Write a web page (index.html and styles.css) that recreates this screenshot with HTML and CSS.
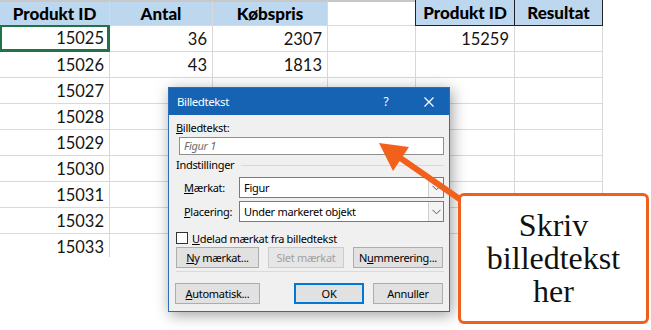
FILE: index.html
```html
<!DOCTYPE html>
<html lang="da">
<head>
<meta charset="utf-8">
<title>Billedtekst</title>
<link rel="stylesheet" href="styles.css">
</head>
<body>
<div class="sheet">
  <div class="c h">Produkt ID</div>
  <div class="c h">Antal</div>
  <div class="c h">Købspris</div>
  <div class="c hb"></div>
  <div class="c h hx">Produkt ID</div>
  <div class="c h hx hr">Resultat</div>

  <div class="c sel">15025</div><div class="c">36</div><div class="c">2307</div><div class="c"></div><div class="c">15259</div><div class="c"></div>
  <div class="c">15026</div><div class="c">43</div><div class="c">1813</div><div class="c"></div><div class="c"></div><div class="c"></div>
  <div class="c">15027</div><div class="c"></div><div class="c"></div><div class="c"></div><div class="c"></div><div class="c"></div>
  <div class="c">15028</div><div class="c"></div><div class="c"></div><div class="c"></div><div class="c"></div><div class="c"></div>
  <div class="c">15029</div><div class="c"></div><div class="c"></div><div class="c"></div><div class="c"></div><div class="c"></div>
  <div class="c">15030</div><div class="c"></div><div class="c"></div><div class="c"></div><div class="c"></div><div class="c"></div>
  <div class="c">15031</div><div class="c"></div><div class="c"></div><div class="c"></div><div class="c"></div><div class="c"></div>
  <div class="c">15032</div><div class="c"></div><div class="c"></div><div class="c"></div><div class="c"></div><div class="c"></div>
  <div class="c">15033</div><div class="c"></div><div class="c"></div><div class="c"></div><div class="c"></div><div class="c"></div>
</div>

<div class="dialog">
  <div class="titlebar">
    <span class="title">Billedtekst</span>
    <span class="help">?</span>
    <span class="close"><svg width="10" height="10" viewBox="0 0 10 10"><path d="M0.5 0.5L9.5 9.5M9.5 0.5L0.5 9.5" stroke="#fff" stroke-width="1.2" fill="none"/></svg></span>
  </div>
  <div class="dbody">
    <div class="lbl"><u>B</u>illedtekst:</div>
    <div class="input">Figur 1</div>
    <div class="group"><span>Indstillinger</span><span class="rule"></span></div>
    <div class="field">
      <span class="flabel"><u>M</u>ærkat:</span>
      <div class="combo"><span class="val">Figur</span><span class="drop"><svg width="9" height="6" viewBox="0 0 9 6"><path d="M0.5 0.8L4.5 4.8L8.5 0.8" stroke="#555" stroke-width="1" fill="none"/></svg></span></div>
    </div>
    <div class="field f2">
      <span class="flabel"><u>P</u>lacering:</span>
      <div class="combo"><span class="val">Under markeret objekt</span><span class="drop"><svg width="9" height="6" viewBox="0 0 9 6"><path d="M0.5 0.8L4.5 4.8L8.5 0.8" stroke="#555" stroke-width="1" fill="none"/></svg></span></div>
    </div>
    <div class="check"><span class="box"></span><span><u>U</u>delad mærkat fra billedtekst</span></div>
    <div class="btnrow">
      <span class="btn b-ny"><u>N</u>y mærkat...</span>
      <span class="btn b-slet dis">Slet mærkat</span>
      <span class="btn b-num">N<u>u</u>mmerering...</span>
    </div>
    <div class="sep"></div>
    <div class="btnrow r2">
      <span class="btn b-auto"><u>A</u>utomatisk...</span>
      <span class="btn b-ok def">OK</span>
      <span class="btn b-ann">Annuller</span>
    </div>
  </div>
</div>

<svg class="arrow" width="651" height="330" viewBox="0 0 651 330">
  <line x1="461" y1="200" x2="396" y2="155" stroke="#f2611c" stroke-width="6"/>
  <polygon points="379,143 409,147 393,171" fill="#f2611c"/>
</svg>

<div class="callout">Skriv<br>billedtekst<br>her</div>
</body>
</html>
```

FILE: styles.css
```css
* { box-sizing: border-box; margin: 0; padding: 0; }

body {
  width: 651px;
  height: 330px;
  background: #fff;
  position: relative;
  overflow: hidden;
  font-family: Lato, "Liberation Sans", sans-serif;
}

/* spreadsheet */
.sheet {
  display: grid;
  grid-template-columns: 110px 103px 115px 88px 99px 88px;
  grid-auto-rows: 26px;
  width: 603px;
  height: 257px;
  overflow: hidden;
}

.c {
  border-right: 1px solid #d9d9d9;
  border-bottom: 1px solid #d9d9d9;
  font-size: 16.5px;
  line-height: 26px;
  text-align: right;
  padding-right: 5px;
  color: #141414;
  white-space: nowrap;
}

.h {
  background: #bdd7ee;
  font-weight: 900;
  font-size: 17px;
  text-align: center;
  padding: 0;
  border-top: 2px solid #c8c8c8;
  line-height: 23px;
  color: #000;
}

.hb { border-top: 2px solid #c8c8c8; }

.hx {
  border-top: none;
  border-bottom: 1px solid #222;
  border-right: 1px solid #222;
  box-shadow: -1px 0 0 #222;
  line-height: 25px;
}

.sel {
  box-shadow: inset 0 0 0 2px #217346;
  border-right-color: #217346;
  border-bottom-color: #217346;
  margin-top: -1px;
  line-height: 27px;
  position: relative;
  z-index: 1;
}

/* dialog */
.dialog {
  position: absolute;
  left: 168px;
  top: 87px;
  width: 282px;
  height: 225px;
  background: #f0f0f0;
  border: 1px solid #2a6db8;
  box-shadow: 2px 3px 14px rgba(0, 0, 0, 0.38);
  font-family: "Noto Sans", "Open Sans", sans-serif;
  font-size: 11px;
  letter-spacing: -0.3px;
  color: #000;
  display: flex;
  flex-direction: column;
  z-index: 2;
}

.titlebar {
  height: 27px;
  background: #1663b3;
  color: #fff;
  display: flex;
  align-items: center;
  padding-left: 8px;
  padding-right: 8px;
  font-size: 11.5px;
  letter-spacing: -0.4px;
  flex: none;
}

.title { flex: 1; }

.help {
  width: 12px;
  text-align: center;
  margin-right: 25px;
  font-size: 12px;
}

.close {
  width: 24px;
  height: 12px;
  display: flex;
  align-items: center;
  justify-content: center;
}

.dbody {
  flex: 1;
  padding: 6px 5px 0 7px;
  display: flex;
  flex-direction: column;
}

.lbl {
  height: 14px;
  line-height: 14px;
}

u { text-decoration: underline; text-underline-offset: 1px; }

.input {
  margin: 2px 0 0 3px;
  height: 18px;
  border: 1px solid #8f8f8f;
  background: #fff;
  padding-left: 4px;
  line-height: 16px;
  font-style: italic;
  color: #6e6e6e;
}

.group {
  margin-top: 3px;
  height: 14px;
  display: flex;
  align-items: center;
  line-height: 14px;
}

.rule {
  flex: 1;
  height: 1px;
  background: #d8d8d8;
  margin-left: 7px;
}

.field {
  margin-top: 5px;
  height: 21px;
  display: flex;
  align-items: center;
  padding-left: 8px;
}

.f2 { margin-top: 3px; }

.flabel { width: 55px; }

.combo {
  flex: 1;
  height: 21px;
  border: 1px solid #7a7a7a;
  background: #fff;
  display: flex;
  align-items: center;
}

.val { flex: 1; padding-left: 4px; }

.drop {
  width: 15px;
  height: 19px;
  border-left: 1px solid #cfcfcf;
  background: #f4f4f4;
  display: flex;
  align-items: center;
  justify-content: center;
}

.check {
  margin-top: 9px;
  height: 14px;
  display: flex;
  align-items: center;
}

.box {
  width: 12px;
  height: 12px;
  border: 1px solid #333;
  background: #fff;
  margin-right: 4px;
}

.btnrow {
  margin-top: 2px;
  height: 21px;
  display: flex;
}

.r2 { margin-top: 11px; }

.btn {
  height: 21px;
  border: 1px solid #adadad;
  background: #e1e1e1;
  text-align: center;
  line-height: 19px;
}

.b-ny { width: 83px; }
.b-slet { width: 76px; margin-left: 9px; }
.b-num { width: 90px; margin-left: 9px; }
.b-auto { width: 85px; margin-left: -1px; }
.b-ok { width: 70px; margin-left: 34px; }
.b-ann { width: 70px; margin-left: 9px; }

.dis {
  color: #a0a0a0;
  border-color: #cccccc;
  background: #e6e6e6;
}

.def {
  border-color: #0078d7;
  box-shadow: inset 0 0 0 1px #0078d7;
}

.sep {
  margin-top: 3px;
  height: 1px;
  background: #dadada;
}

/* annotation */
.arrow {
  position: absolute;
  left: 0;
  top: 0;
  z-index: 3;
}

.callout {
  position: absolute;
  left: 458px;
  top: 193px;
  width: 191px;
  height: 131px;
  border: 3px solid #f0601c;
  border-radius: 6px;
  background: #fff;
  display: flex;
  align-items: center;
  justify-content: center;
  text-align: center;
  font-family: "Liberation Serif", "Times New Roman", serif;
  font-size: 32px;
  line-height: 33px;
  color: #111;
  z-index: 4;
}
```
